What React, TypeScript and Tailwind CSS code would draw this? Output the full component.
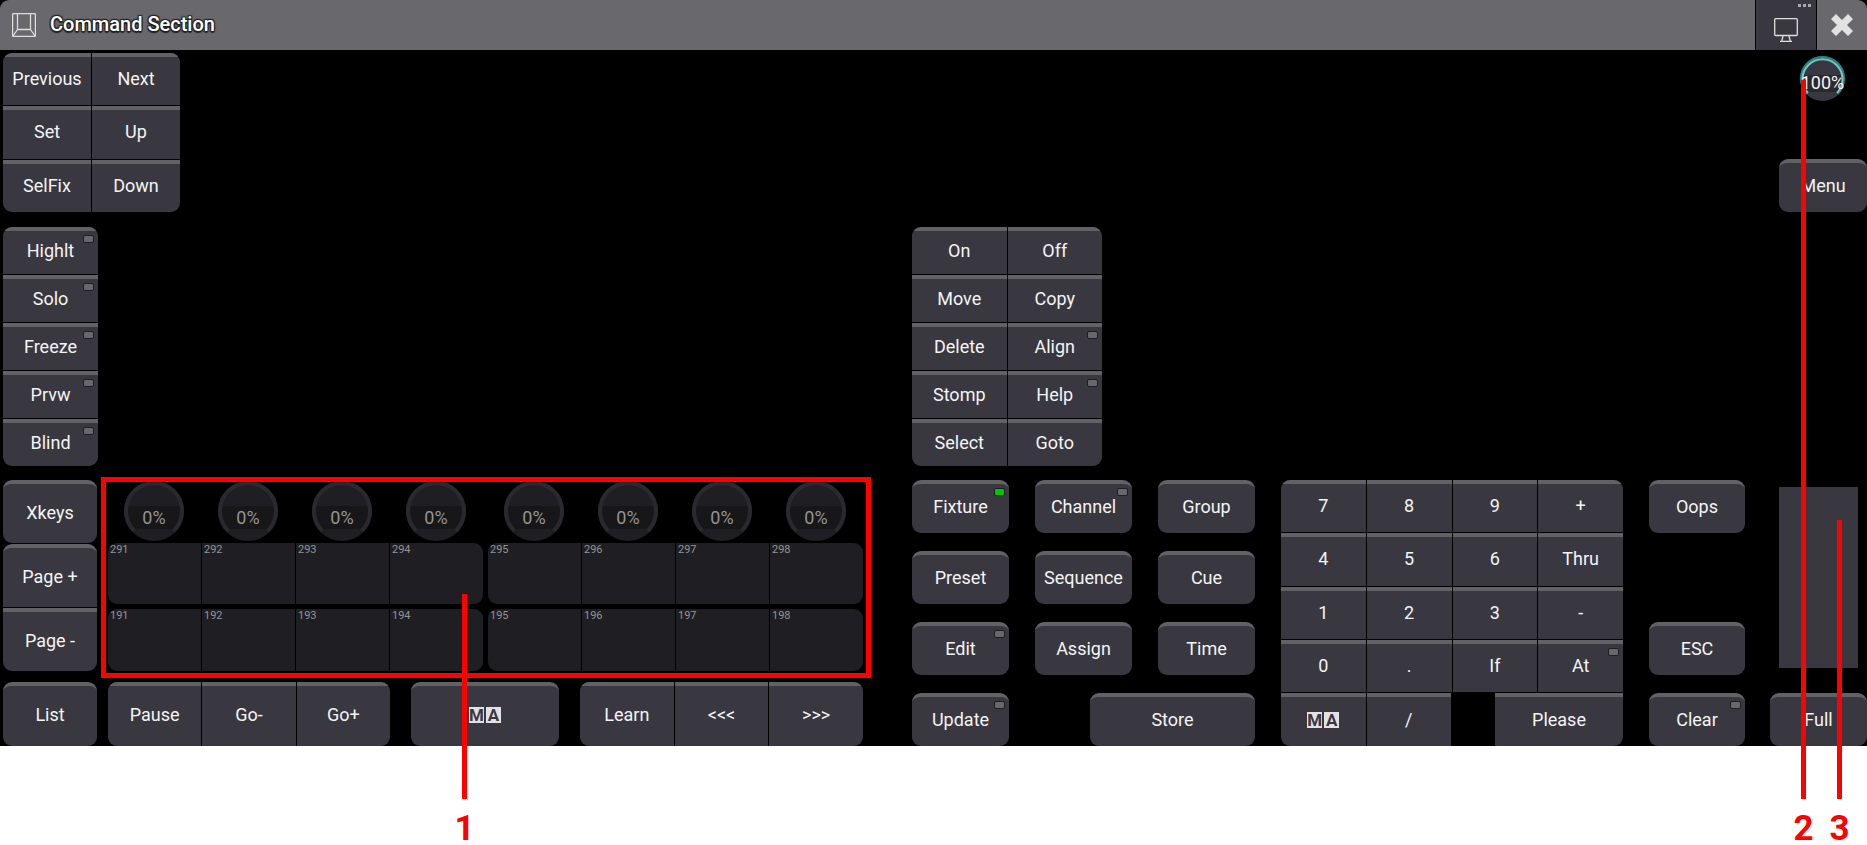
import React from "react";

type KeyProps = {
  label: React.ReactNode;
  className?: string;
  led?: "off" | "on";
  tall?: boolean;
  ariaLabel?: string;
};

function Key({ label, className = "", led, tall = false, ariaLabel }: KeyProps) {
  return (
    <button
      type="button"
      aria-label={ariaLabel}
      className={`relative flex items-center justify-center overflow-hidden border-t-4 border-[#626166] bg-[#393840] text-[18px] leading-5 text-[#f4f4f4] ${
        tall ? "pb-0.5" : "pb-1"
      } ${className}`}
    >
      {label}
      {led && (
        <span
          className={`absolute top-1 right-1 h-2 w-[11px] rounded-[2px] border border-[#1d1c20] ${
            led === "on" ? "bg-[#00c800]" : "bg-[#68676b]"
          }`}
        />
      )}
    </button>
  );
}

function MaMark() {
  return (
    <span className="flex gap-0.5 text-[17px] leading-4 font-bold text-[#393840]">
      <span className="w-[15px] bg-[#e2e2e2] text-center">M</span>
      <span className="w-[15px] bg-[#e2e2e2] text-center">A</span>
    </span>
  );
}

function Knob({ id }: { id: string }) {
  return (
    <label className="relative ml-4 flex size-[60px] items-center justify-center">
      <svg viewBox="0 0 60 60" className="absolute inset-0 size-full" aria-hidden="true">
        <circle cx="30" cy="30" r="30" fill="#1f1e22" />
        <path d="M2.8 25H57.2A27 27 0 0 1 50 48H10A27 27 0 0 1 2.8 25Z" fill="#171719" />
        <path d="M10.2 49.8A28 28 0 1 1 49.8 49.8" fill="none" stroke="#2a292f" strokeWidth="4" />
      </svg>
      <span className="relative pt-3.5 text-[18px] leading-5 text-[#949494]">0%</span>
      <input
        type="range"
        defaultValue={0}
        aria-label={`Encoder ${id}`}
        className="absolute inset-0 size-full opacity-0"
      />
    </label>
  );
}

function ExecutorGroup({ numbers }: { numbers: number[] }) {
  return (
    <div className="grid flex-1 grid-cols-4 gap-px overflow-hidden rounded-[9px]">
      {numbers.map((n) => (
        <button
          key={n}
          type="button"
          className="flex items-start bg-[#1f1e22] pt-px pl-0.5 text-[11px] leading-[11px] text-[#949494]"
        >
          {n}
        </button>
      ))}
    </div>
  );
}

function Callout({ n, className }: { n: number; className: string }) {
  return (
    <div className={`pointer-events-none absolute z-10 flex w-[25px] flex-col items-center text-[#ff0000] ${className}`}>
      <span className="w-[5px] flex-1 bg-[#ff0000]" />
      <span className="pt-3.5 text-[35px] leading-8 font-bold">{n}</span>
    </div>
  );
}

const keysRow = (first: number) => [0, 1, 2, 3].map((i) => first + i);

export default function App() {
  return (
    <div className="min-h-screen bg-white font-[Roboto,sans-serif]">
      <div className="bg-black">
        <header className="flex h-[50px] items-stretch overflow-hidden rounded-t-[9px] bg-[#68686d]">
          <svg viewBox="0 0 24 24" className="mt-[13px] ml-3 size-6" fill="none" stroke="#dededc" aria-hidden="true">
            <rect x="0.6" y="0.6" width="22.8" height="22.8" rx="1" strokeWidth="1.3" />
            <path d="M5.5 1V16.5H18.5V1M5.5 16.5L1 23M18.5 16.5L23 23" strokeWidth="1.3" />
          </svg>
          <h1 className="mt-3 ml-3.5 flex-1 text-[20px] leading-6 font-medium text-white [text-shadow:1px_1px_1px_#222,-1px_-1px_1px_#222,1px_-1px_1px_#222,-1px_1px_1px_#222,0_2px_1px_#222]">
            Command Section
          </h1>
          <button
            type="button"
            aria-label="Display"
            className="relative flex w-[62px] justify-center border-x border-black bg-[#393840] pt-[18px]"
          >
            <svg viewBox="0 0 24 24" className="size-6" fill="none" stroke="#dededc" strokeWidth="1.3" aria-hidden="true">
              <rect x="0.7" y="0.7" width="22.6" height="16.8" rx="1" />
              <path d="M9 18L7.8 23M15 18L16.2 23M6 23.3H18" />
            </svg>
            <span className="absolute top-1 right-[5px] flex gap-0.5">
              <i className="size-[3px] bg-[#a9a9ac]" />
              <i className="size-[3px] bg-[#a9a9ac]" />
              <i className="size-[3px] bg-[#a9a9ac]" />
            </span>
          </button>
          <button type="button" aria-label="Close" className="flex w-[50px] items-center justify-center">
            <svg viewBox="0 0 24 24" className="size-6" aria-hidden="true">
              <path d="M6 1L12 7L18 1L23 6L17 12L23 18L18 23L12 17L6 23L1 18L7 12L1 6Z" fill="#e2e2e2" />
            </svg>
          </button>
        </header>

        <main className="flex items-end pt-[3px] pl-[3px]">
          <div className="mr-auto flex w-[860px] flex-col">
            <div className="grid h-[159px] w-[177px] grid-cols-2 gap-px overflow-hidden rounded-[9px]">
              {["Previous", "Next", "Set", "Up", "SelFix", "Down"].map((k) => (
                <Key key={k} label={k} />
              ))}
            </div>
            <div className="mt-[15px] flex w-[95px] flex-col gap-px overflow-hidden rounded-[9px]">
              {["Highlt", "Solo", "Freeze", "Prvw", "Blind"].map((k) => (
                <Key key={k} label={k} led="off" className="h-[47px]" />
              ))}
            </div>

            <div className="mt-3.5 flex gap-[11px]">
              <div className="flex w-[94px] flex-col gap-px">
                <Key tall label="Xkeys" className="h-[63px] rounded-[9px]" />
                <Key tall label="Page +" className="h-[63px] rounded-t-[9px]" />
                <Key tall label="Page -" className="h-[63px] rounded-b-[9px]" />
              </div>
              <div className="relative flex flex-1 flex-col">
                <div className="flex h-[63px] gap-[5px] pt-px">
                  {[291, 295].map((first) => (
                    <div key={first} className="grid flex-1 grid-cols-4 gap-px">
                      {keysRow(first).map((n) => (
                        <Knob key={n} id={String(n)} />
                      ))}
                    </div>
                  ))}
                </div>
                <div className="flex h-[61px] gap-[5px]">
                  <ExecutorGroup numbers={keysRow(291)} />
                  <ExecutorGroup numbers={keysRow(295)} />
                </div>
                <div className="mt-[5px] flex h-[62px] gap-[5px]">
                  <ExecutorGroup numbers={keysRow(191)} />
                  <ExecutorGroup numbers={keysRow(195)} />
                </div>
                <div className="pointer-events-none absolute -top-[3px] -right-2 -bottom-[7px] -left-[7px] border-5 border-[#ff0000]" />
                <Callout n={1} className="top-[114px] -bottom-[174px] left-[344px]" />
              </div>
            </div>

            <div className="mt-[11px] flex h-16">
              <Key tall label="List" className="w-[94px] rounded-[9px]" />
              <div className="ml-[11px] grid w-[282px] grid-cols-3 gap-px overflow-hidden rounded-[9px]">
                <Key tall label="Pause" />
                <Key tall label="Go-" />
                <Key tall label="Go+" />
              </div>
              <Key tall label={<MaMark />} ariaLabel="MA" className="mx-[21px] flex-1 rounded-[9px]" />
              <div className="grid w-[283px] grid-cols-3 gap-px overflow-hidden rounded-[9px]">
                <Key tall label="Learn" />
                <Key tall label="<<<" />
                <Key tall label=">>>" />
              </div>
            </div>
          </div>

          <div className="flex items-end gap-[26px] self-stretch">
            <div className="flex w-[343px] flex-col gap-3.5">
              <div className="grid w-[190px] grid-cols-2 gap-px overflow-hidden rounded-[9px]">
                {["On", "Off", "Move", "Copy", "Delete", "Align", "Stomp", "Help", "Select", "Goto"].map((k) => (
                  <Key key={k} label={k} led={k === "Align" || k === "Help" ? "off" : undefined} className="h-[47px]" />
                ))}
              </div>
              <div className="flex flex-col gap-[18px]">
                <div className="grid grid-cols-3 gap-x-[26px] gap-y-[18px]">
                  <Key label="Fixture" led="on" className="h-[53px] rounded-[9px]" />
                  <Key label="Channel" led="off" className="h-[53px] rounded-[9px]" />
                  <Key label="Group" className="h-[53px] rounded-[9px]" />
                  <Key label="Preset" className="h-[53px] rounded-[9px]" />
                  <Key label="Sequence" className="h-[53px] rounded-[9px]" />
                  <Key label="Cue" className="h-[53px] rounded-[9px]" />
                  <Key label="Edit" led="off" className="h-[53px] rounded-[9px]" />
                  <Key label="Assign" className="h-[53px] rounded-[9px]" />
                  <Key label="Time" className="h-[53px] rounded-[9px]" />
                </div>
                <div className="flex justify-between">
                  <Key label="Update" led="off" className="h-[53px] w-[97px] rounded-[9px]" />
                  <Key label="Store" className="h-[53px] w-[165px] rounded-[9px]" />
                </div>
              </div>
            </div>

            <div className="flex h-[266px] w-[342px] flex-col gap-px overflow-hidden rounded-[9px]">
              <div className="grid flex-1 grid-cols-4 gap-px">
                {["7", "8", "9", "+", "4", "5", "6", "Thru", "1", "2", "3", "-", "0", ".", "If", "At"].map((k) => (
                  <Key key={k} label={k} led={k === "At" ? "off" : undefined} />
                ))}
              </div>
              <div className="flex h-[53px] justify-between">
                <div className="grid w-[170px] grid-cols-2 gap-px">
                  <Key label={<MaMark />} ariaLabel="MA" />
                  <Key label="/" />
                </div>
                <Key label="Please" className="w-32" />
              </div>
            </div>

            <div className="flex gap-[25px] self-stretch">
              <div className="flex w-24 flex-col justify-end gap-[18px]">
                <Key label="Oops" className="mb-[71px] h-[53px] rounded-[9px]" />
                <Key label="ESC" className="h-[53px] rounded-[9px]" />
                <Key label="Clear" led="off" className="h-[53px] rounded-[9px]" />
              </div>

              <div className="relative flex w-[97px] flex-col items-end">
                <label className="relative mt-[3px] mr-[22px] flex size-[45px] items-center justify-center">
                  <svg viewBox="0 0 45 45" className="absolute inset-0 size-full" aria-hidden="true">
                    <circle cx="22.5" cy="22.5" r="22.5" fill="#393840" />
                    <path d="M2.5 19H42.5A20 20 0 0 1 37.5 36H7.5A20 20 0 0 1 2.5 19Z" fill="#2a292e" />
                    <path d="M7.3 37.7A21.5 21.5 0 1 1 37.7 37.7" fill="none" stroke="#1a8a8a" strokeWidth="2" />
                    <path d="M8 37A20 20 0 1 1 37 37" fill="none" stroke="#7fc4c4" strokeWidth="2" />
                  </svg>
                  <span className="relative pt-2 text-[18px] leading-5 text-[#f4f4f4]">100%</span>
                  <input
                    type="range"
                    defaultValue={100}
                    aria-label="Grand master"
                    className="absolute inset-0 size-full opacity-0"
                  />
                </label>
                <Key label="Menu" className="mt-[58px] h-[53px] w-[88px] rounded-[9px]" />
                <input
                  type="range"
                  aria-label="Level wheel"
                  className="mt-auto mr-[9px] h-[181px] w-[79px] appearance-none bg-[#393840] [&::-webkit-slider-thumb]:size-0 [&::-webkit-slider-thumb]:appearance-none"
                />
                <Key label="Full" className="mt-[25px] h-[53px] w-full rounded-[9px]" />
                <Callout n={2} className="top-[27px] right-[51px] -bottom-[99px]" />
                <Callout n={3} className="top-[467px] right-[15px] -bottom-[99px]" />
              </div>
            </div>
          </div>
        </main>
      </div>
    </div>
  );
}
